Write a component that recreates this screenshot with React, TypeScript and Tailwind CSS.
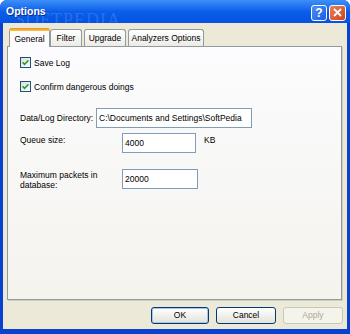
import React from "react"

const font = { fontFamily: '"Liberation Sans", Arial, sans-serif' }

function Checkbox({ label }: { label: string }) {
  return (
    <div className="flex items-center h-[11px]">
      <div className="w-[11px] h-[11px] border border-[#1C5180] bg-gradient-to-br from-[#DCDCD7] to-white flex items-center justify-center">
        <svg width="7" height="7" viewBox="0 0 7 7">
          <path d="M0.5 3.2 L2.6 5.4 L6.5 1.2" fill="none" stroke="#21A121" strokeWidth="1.6" />
        </svg>
      </div>
      <span className="ml-[3px] text-[8.5px] leading-[10px] text-black">{label}</span>
    </div>
  )
}

function Tab({ label, width, active }: { label: string; width: string; active?: boolean }) {
  if (active) {
    return (
      <div
        className={`${width} h-[19px] -mb-[1px] relative z-10 bg-[#FCFCFE] border-x border-[#919B9C] rounded-t-[3px] flex flex-col`}
      >
        <div className="h-[3px] -mx-[1px] rounded-t-[3px] bg-gradient-to-b from-[#E68B2C] to-[#FFC73C]" />
        <div className="flex-1 flex items-center justify-center text-[8.5px] text-black">{label}</div>
      </div>
    )
  }
  return (
    <div
      className={`${width} h-[17px] border border-b-0 border-[#919B9C] rounded-t-[3px] bg-gradient-to-b from-white to-[#ECEBE6] flex items-center justify-center text-[8.5px] text-black`}
    >
      {label}
    </div>
  )
}

function Button({ label, def, disabled, width }: { label: string; def?: boolean; disabled?: boolean; width: string }) {
  return (
    <div
      className={`${width} h-[17px] rounded-[3px] border flex items-center justify-center text-[8.5px] ${
        disabled
          ? "border-[#C9C7BA] bg-[#F5F4EA] text-[#ACA899]"
          : "border-[#003C74] bg-gradient-to-b from-white to-[#E3E2DA] text-black"
      } ${def ? "shadow-[inset_0_0_0_1px_#A8C4EE]" : ""}`}
    >
      {label}
    </div>
  )
}

function Input({ value, width }: { value: string; width: string }) {
  return (
    <div className={`${width} h-[20px] border border-[#7F9DB9] bg-white flex items-center pl-[2px] text-[8.5px] text-black whitespace-nowrap overflow-hidden`}>
      {value}
    </div>
  )
}

export default function App() {
  return (
    <div style={font} className="w-[350px] h-[334px] flex flex-col bg-[#0842CF] rounded-t-[7px] overflow-hidden relative">
      {/* title bar */}
      <div className="h-[23px] shrink-0 flex items-center pl-[6px] pr-[4px] bg-gradient-to-b from-[#3D8FF7] via-[#0A5EEB] to-[#0553E0]">
        <span className="text-white font-bold text-[10.5px] [text-shadow:1px_1px_0_#0B2F8E] relative z-10">Options</span>
        <div className="ml-auto flex gap-[2px] mt-[2px]">
          <div className="w-[16px] h-[16px] rounded-[3px] border border-white bg-gradient-to-br from-[#4E8FF5] to-[#1A5CE0] flex items-center justify-center text-white font-bold text-[12px] leading-none">
            ?
          </div>
          <div className="w-[17px] h-[16px] rounded-[3px] border border-white bg-gradient-to-br from-[#E8805A] to-[#D0401A] flex items-center justify-center">
            <svg width="9" height="9" viewBox="0 0 9 9">
              <path d="M1 1 L8 8 M8 1 L1 8" stroke="white" strokeWidth="1.8" />
            </svg>
          </div>
        </div>
      </div>

      {/* client area */}
      <div className="flex-1 mx-[3px] mb-[5px] bg-[#ECE9D8] flex flex-col">
        {/* tabs */}
        <div className="flex items-end pl-[6px] pt-[5px]">
          <Tab label="General" width="w-[41px]" active />
          <Tab label="Filter" width="w-[32px]" />
          <div className="ml-[2px]"><Tab label="Upgrade" width="w-[42px]" /></div>
          <div className="ml-[2px]"><Tab label="Analyzers Options" width="w-[76px]" /></div>
        </div>

        {/* panel */}
        <div className="ml-[4px] mr-[5px] h-[254px] border border-[#919B9C] shadow-[1px_1px_0_#D0CEBF] bg-gradient-to-b from-[#FCFCFE] to-[#F4F3EE] flex flex-col pl-[12px] pt-[10px] text-[8.5px] leading-[10px] text-black">
          <Checkbox label="Save Log" />
          <div className="mt-[13px]">
            <Checkbox label="Confirm dangerous doings" />
          </div>

          <div className="mt-[16px] flex items-center">
            <span className="w-[76px] whitespace-nowrap">Data/Log Directory:</span>
            <Input value="C:\Documents and Settings\SoftPedia" width="w-[156px]" />
          </div>

          <div className="mt-[5px] flex items-start">
            <span className="w-[102px] pt-[2px]">Queue size:</span>
            <Input value="4000" width="w-[74px]" />
            <span className="ml-[8px] pt-[2px]">KB</span>
          </div>

          <div className="mt-[16px] flex items-start">
            <span className="w-[102px] pt-[1px]">
              Maximum packets in
              <br />
              database:
            </span>
            <Input value="20000" width="w-[76px]" />
          </div>
        </div>

        {/* buttons */}
        <div className="flex justify-end gap-[7px] mt-[7px] pr-[4px]">
          <Button label="OK" width="w-[58px]" def />
          <Button label="Cancel" width="w-[60px]" />
          <Button label="Apply" width="w-[60px]" disabled />
        </div>
      </div>

      {/* watermark */}
      <span className="absolute left-[15px] top-[11px] text-[18px] leading-[18px] tracking-[1px] text-white/15 [font-family:'Liberation_Serif',serif] pointer-events-none">
        SOFTPEDIA
      </span>
    </div>
  )
}
